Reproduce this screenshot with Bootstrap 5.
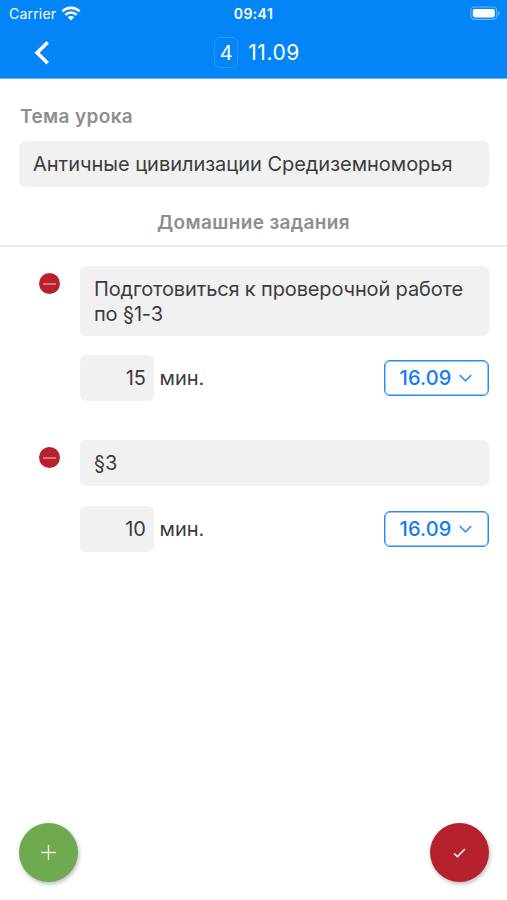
<!DOCTYPE html>
<html lang="ru">
<head>
<meta charset="utf-8">
<meta name="viewport" content="width=device-width, initial-scale=1">
<title>Домашние задания</title>
<link href="https://cdn.jsdelivr.net/npm/bootstrap@5.3.0/dist/css/bootstrap.min.css" rel="stylesheet">
<style>
body{font-family:Inter,"Liberation Sans",sans-serif;color:#3c3c3c;font-size:20px;line-height:25px;background:#fff}
.screen{height:900px}
.topbar{background:#0485f7;height:79px;border-bottom:1px solid #5fb2fb}
.side{flex:1 1 0}
.status{height:27px;font-size:14px;line-height:27px;padding:0 7px 0 9px}
.carrier{letter-spacing:.2px}
.clock{letter-spacing:.4px;margin-right:2px}
.titlebar{height:51px}
.back{padding-left:34px}
.balance{padding-left:34px}
.lesson{padding-left:7px;gap:10px}
.lesson-no{width:24px;height:31px;border:1px solid #2596fa;border-radius:6px;line-height:30px}
.day{font-size:21px;line-height:27px;letter-spacing:.5px}
.heading{color:#8e8e90;font-weight:600;font-size:19px;line-height:24px;letter-spacing:.36px}
.topic{padding:26px 18px 0 20px}
.field{background:#f1f1f1;border-radius:6px;padding:11px 14px 9px;min-height:46px}
.topic-field{margin:12px 0 0 -1px;letter-spacing:-.03px}
.rule{border-bottom:2px solid #ebebec;padding:24px 0 10px}
.task{padding:19px 18px 0 39px}
.task + .task{padding-top:39px}
.work{letter-spacing:-.14px}
.remove{width:21px;height:21px;margin:7px 20px 0 0;background:#b8202c}
.minutes{width:74px;padding:11px 8px 9px}
.unit{margin-left:5.5px;padding-top:1px}
.date{width:105px;height:36px;border:1px solid #2b8bf4;box-shadow:inset 0 0 0 .5px #2b8bf4;border-radius:6px;color:#0f7df0;font-weight:500;font-size:20px;letter-spacing:.1px;background:#fff;line-height:25px}
.date span{padding-top:1px}
.date svg{margin:0 1px 0 8px}
.times{margin-top:19px}
.task + .task .times{margin-top:20px}
.fab{width:59px;height:59px;box-shadow:1px 2px 4px rgba(0,0,0,.28)}
.fab-add{background:#6fa950}
.fab-save{background:#b5212c}
.actions{padding:0 18px 18px 19px}
</style>
<script src="https://cdn.jsdelivr.net/npm/bootstrap@5.3.0/dist/js/bootstrap.bundle.min.js"></script>
</head>
<body>
<div class="screen d-flex flex-column overflow-hidden">
  <header class="topbar text-white flex-shrink-0">
    <div class="status d-flex align-items-center">
      <div class="side d-flex align-items-center">
        <span class="carrier">Carrier</span>
        <svg class="ms-1" width="22" height="16" viewBox="0 0 22 16" fill="none" stroke="#fff" stroke-width="2.6"><path d="M2.5 5.4a12 12 0 0 1 17 0M5.4 8.8a7.8 7.8 0 0 1 11.2 0"/><path d="M7.8 11.3a4.6 4.6 0 0 1 6.4 0L11 14.5z" fill="#fff" stroke="none"/></svg>
      </div>
      <span class="clock fw-semibold">09:41</span>
      <div class="side d-flex justify-content-end">
        <svg width="30" height="15" viewBox="0 0 30 15"><rect x=".8" y="1" width="26" height="12.4" rx="3.6" fill="none" stroke="#66b5fa" stroke-width="1.1"/><rect x="2.8" y="3" width="22" height="8.4" rx="1.8" fill="#fff"/><path d="M28.2 5v4.5q1.5-.6 1.5-2.25T28.2 5z" fill="#66b5fa"/></svg>
      </div>
    </div>
    <div class="titlebar d-flex align-items-center">
      <div class="side back d-flex"><svg width="17" height="26" viewBox="0 0 17 26" fill="none" stroke="#fff" stroke-width="3.6"><path d="M13.7 2.2L3.2 12.7l10.5 10.5"/></svg></div>
      <div class="lesson d-flex align-items-center"><span class="lesson-no text-center">4</span><span class="day">11.09</span></div>
      <div class="side balance"></div>
    </div>
  </header>
  <main class="flex-grow-1">
    <section class="topic">
      <h1 class="heading mb-0">Тема урока</h1>
      <div class="field topic-field">Античные цивилизации Средиземноморья</div>
    </section>
    <h2 class="heading rule text-center mb-0">Домашние задания</h2>
    <section class="task d-flex align-items-start">
      <button class="remove btn p-0 border-0 rounded-circle d-flex align-items-center justify-content-center flex-shrink-0" aria-label="Удалить"><svg width="13" height="2"><path d="M0 1h13" stroke="#eda2a5" stroke-width="1.3"/></svg></button>
      <div class="flex-grow-1">
        <div class="field work">Подготовиться к проверочной работе<br>по §1-3</div>
        <div class="times d-flex align-items-center">
          <div class="field minutes text-end">15</div><span class="unit">мин.</span>
          <button class="date btn p-0 ms-auto d-flex align-items-center justify-content-center"><span>16.09</span><svg width="13" height="9" viewBox="0 0 13 9" fill="none" stroke="#3b93f3" stroke-width="1.7"><path d="M.8 1.2l5.7 5.6 5.7-5.6"/></svg></button>
        </div>
      </div>
    </section>
    <section class="task d-flex align-items-start">
      <button class="remove btn p-0 border-0 rounded-circle d-flex align-items-center justify-content-center flex-shrink-0" aria-label="Удалить"><svg width="13" height="2"><path d="M0 1h13" stroke="#eda2a5" stroke-width="1.3"/></svg></button>
      <div class="flex-grow-1">
        <div class="field">§3</div>
        <div class="times d-flex align-items-center">
          <div class="field minutes text-end">10</div><span class="unit">мин.</span>
          <button class="date btn p-0 ms-auto d-flex align-items-center justify-content-center"><span>16.09</span><svg width="13" height="9" viewBox="0 0 13 9" fill="none" stroke="#3b93f3" stroke-width="1.7"><path d="M.8 1.2l5.7 5.6 5.7-5.6"/></svg></button>
        </div>
      </div>
    </section>
  </main>
  <footer class="actions d-flex justify-content-between">
    <button class="fab fab-add btn p-0 border-0 rounded-circle d-flex align-items-center justify-content-center" aria-label="Добавить"><svg width="15" height="15" stroke="#e4f2dc" stroke-width="1.4"><path d="M0 7.5h15M7.5 0v15"/></svg></button>
    <button class="fab fab-save btn p-0 border-0 rounded-circle d-flex align-items-center justify-content-center" aria-label="Сохранить"><svg width="13" height="10" viewBox="0 0 13 10" fill="none" stroke="#fbe3e3" stroke-width="1.6"><path d="M1 5.4l3.4 3.2L12 1"/></svg></button>
  </footer>
</div>
</body>
</html>
